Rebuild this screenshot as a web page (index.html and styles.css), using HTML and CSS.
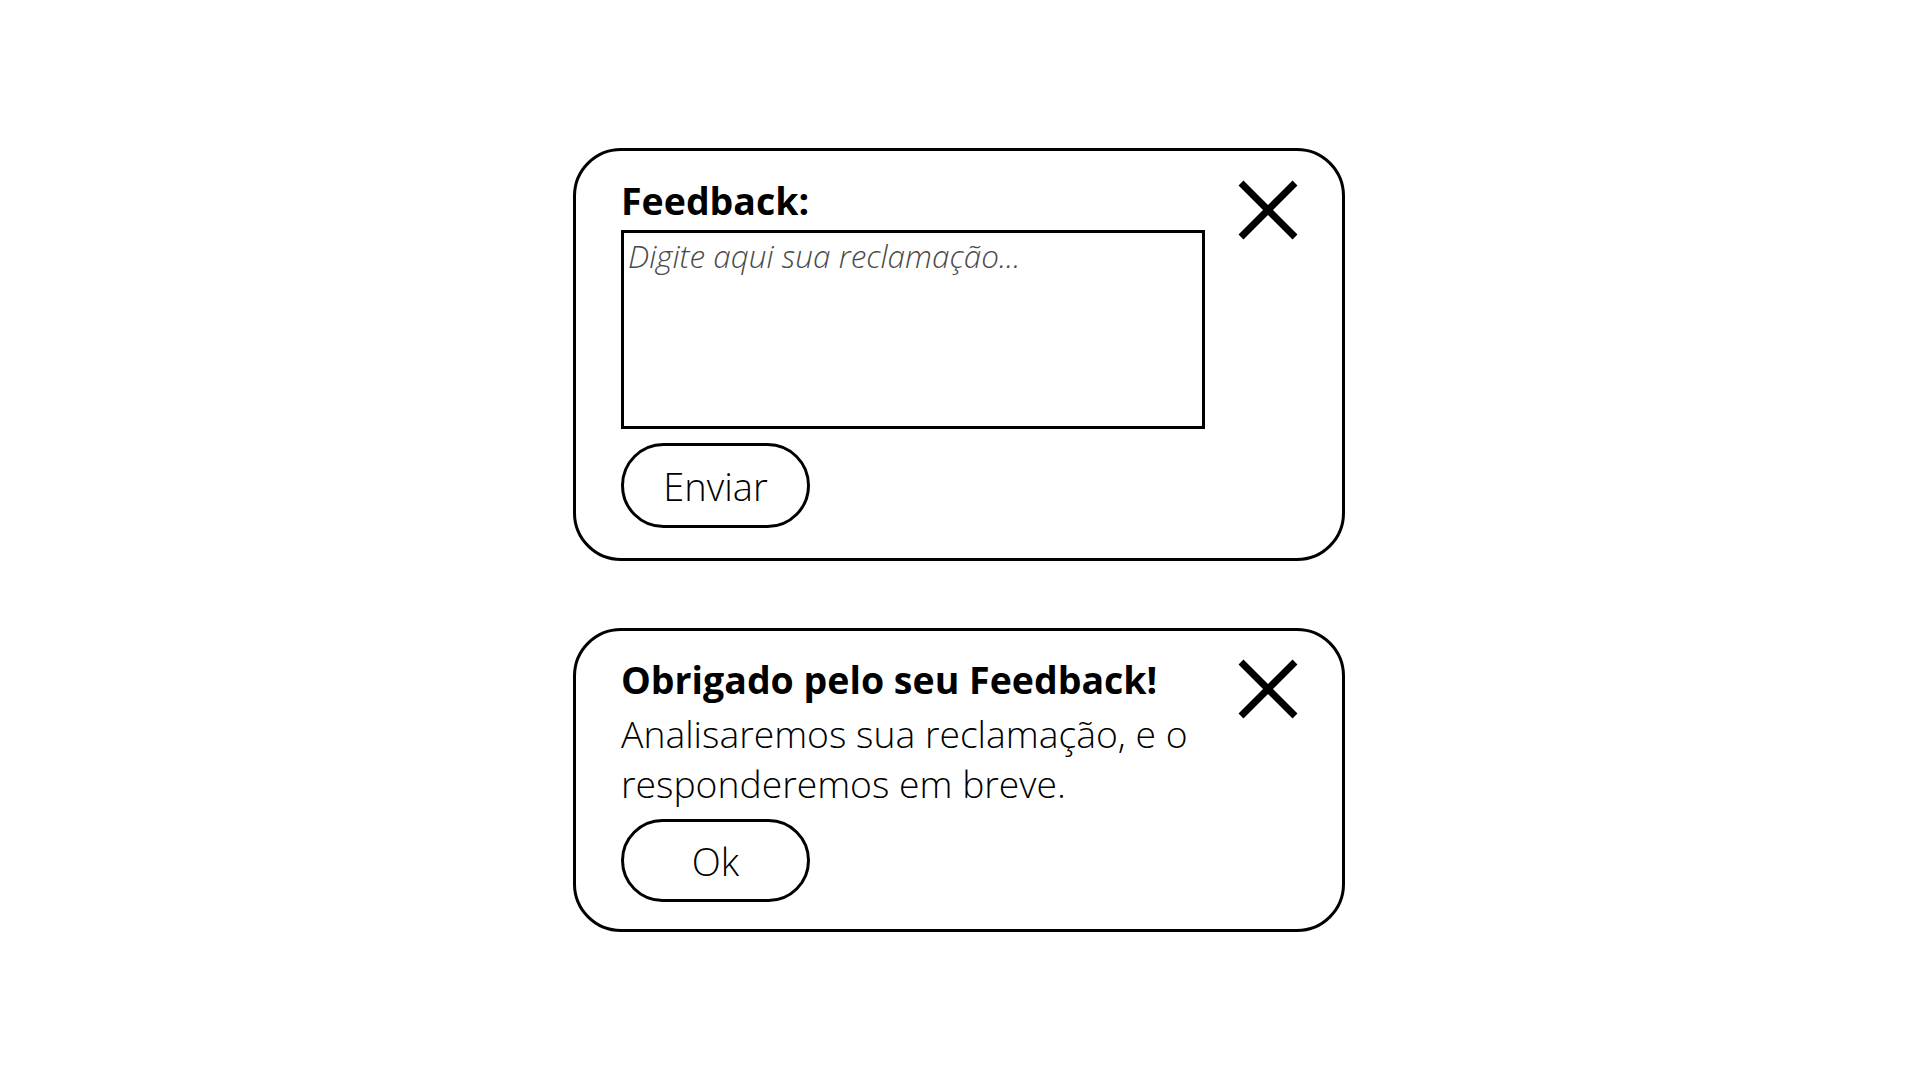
FILE: index.html
```html
<!DOCTYPE html>
<html>
<head>
  <meta charset="UTF-8"/>
  <meta content="width=device-width, initial-scale=1" name="viewport"/>
  <title>Feedback</title>
  <link rel="stylesheet" href="styles.css">
</head>
<body>
  <div class="card" id="feedbackCard">
    <div class="content">
      <h2>Feedback:</h2>
      <textarea placeholder="Digite aqui sua reclamação..."></textarea>
      <button class="pill" type="button">Enviar</button>
    </div>
    <button class="close" type="button" aria-label="Fechar">
      <svg width="62" height="62" viewBox="0 0 62 62">
        <path d="M4 4 L58 58 M58 4 L4 58" stroke="#000" stroke-width="7" stroke-linecap="butt"/>
      </svg>
    </button>
  </div>

  <div class="card thanks" id="thanksCard">
    <div class="content">
      <h2>Obrigado pelo seu Feedback!</h2>
      <p>Analisaremos sua reclamação, e o<br>responderemos em breve.</p>
      <button class="pill" type="button">Ok</button>
    </div>
    <button class="close" type="button" aria-label="Fechar">
      <svg width="62" height="62" viewBox="0 0 62 62">
        <path d="M4 4 L58 58 M58 4 L4 58" stroke="#000" stroke-width="7" stroke-linecap="butt"/>
      </svg>
    </button>
  </div>
</body>
</html>
```

FILE: styles.css
```css
body {
  font-family: "Open Sans", Arial, sans-serif;
  background: #fff;
  color: #000;
  margin: 0;
  height: 100vh;
  display: flex;
  flex-direction: column;
  align-items: center;
  padding-top: 148px;
  box-sizing: border-box;
  gap: 67px;
}
.card {
  width: 772px;
  margin-left: -2px;
  box-sizing: border-box;
  border: 3px solid #000;
  border-radius: 48px;
  padding: 28px 43px 30px 45px;
  display: flex;
  justify-content: space-between;
  align-items: flex-start;
}
.thanks {
  padding-top: 27px;
  padding-bottom: 27px;
}
.content {
  display: flex;
  flex-direction: column;
  align-items: flex-start;
}
.card h2 {
  font-size: 37.5px;
  font-weight: 700;
  line-height: 44px;
  margin: 0;
}
textarea {
  width: 584px;
  height: 199px;
  box-sizing: border-box;
  margin-top: 7px;
  border: 3px solid #000;
  border-radius: 0;
  padding: 1px 4px;
  font-family: "Open Sans", Arial, sans-serif;
  font-size: 31.5px;
  font-weight: 300;
  resize: none;
  outline: none;
}
textarea::placeholder {
  font-style: italic;
  color: #4a4a4a;
}
.card p {
  font-size: 37.3px;
  font-weight: 300;
  line-height: 50px;
  margin: 7px 0 0;
}
.pill {
  width: 189px;
  height: 85px;
  margin-top: 14px;
  border: 3px solid #000;
  border-radius: 43px;
  background: #fff;
  font-family: "Open Sans", Arial, sans-serif;
  font-size: 38px;
  font-weight: 300;
  color: #000;
  cursor: pointer;
  padding: 0;
}
.thanks .pill {
  height: 83px;
  margin-top: 10px;
}
.close {
  background: none;
  border: none;
  padding: 0;
  margin-top: 0;
  width: 62px;
  height: 62px;
  cursor: pointer;
}
.close svg {
  display: block;
}
```
